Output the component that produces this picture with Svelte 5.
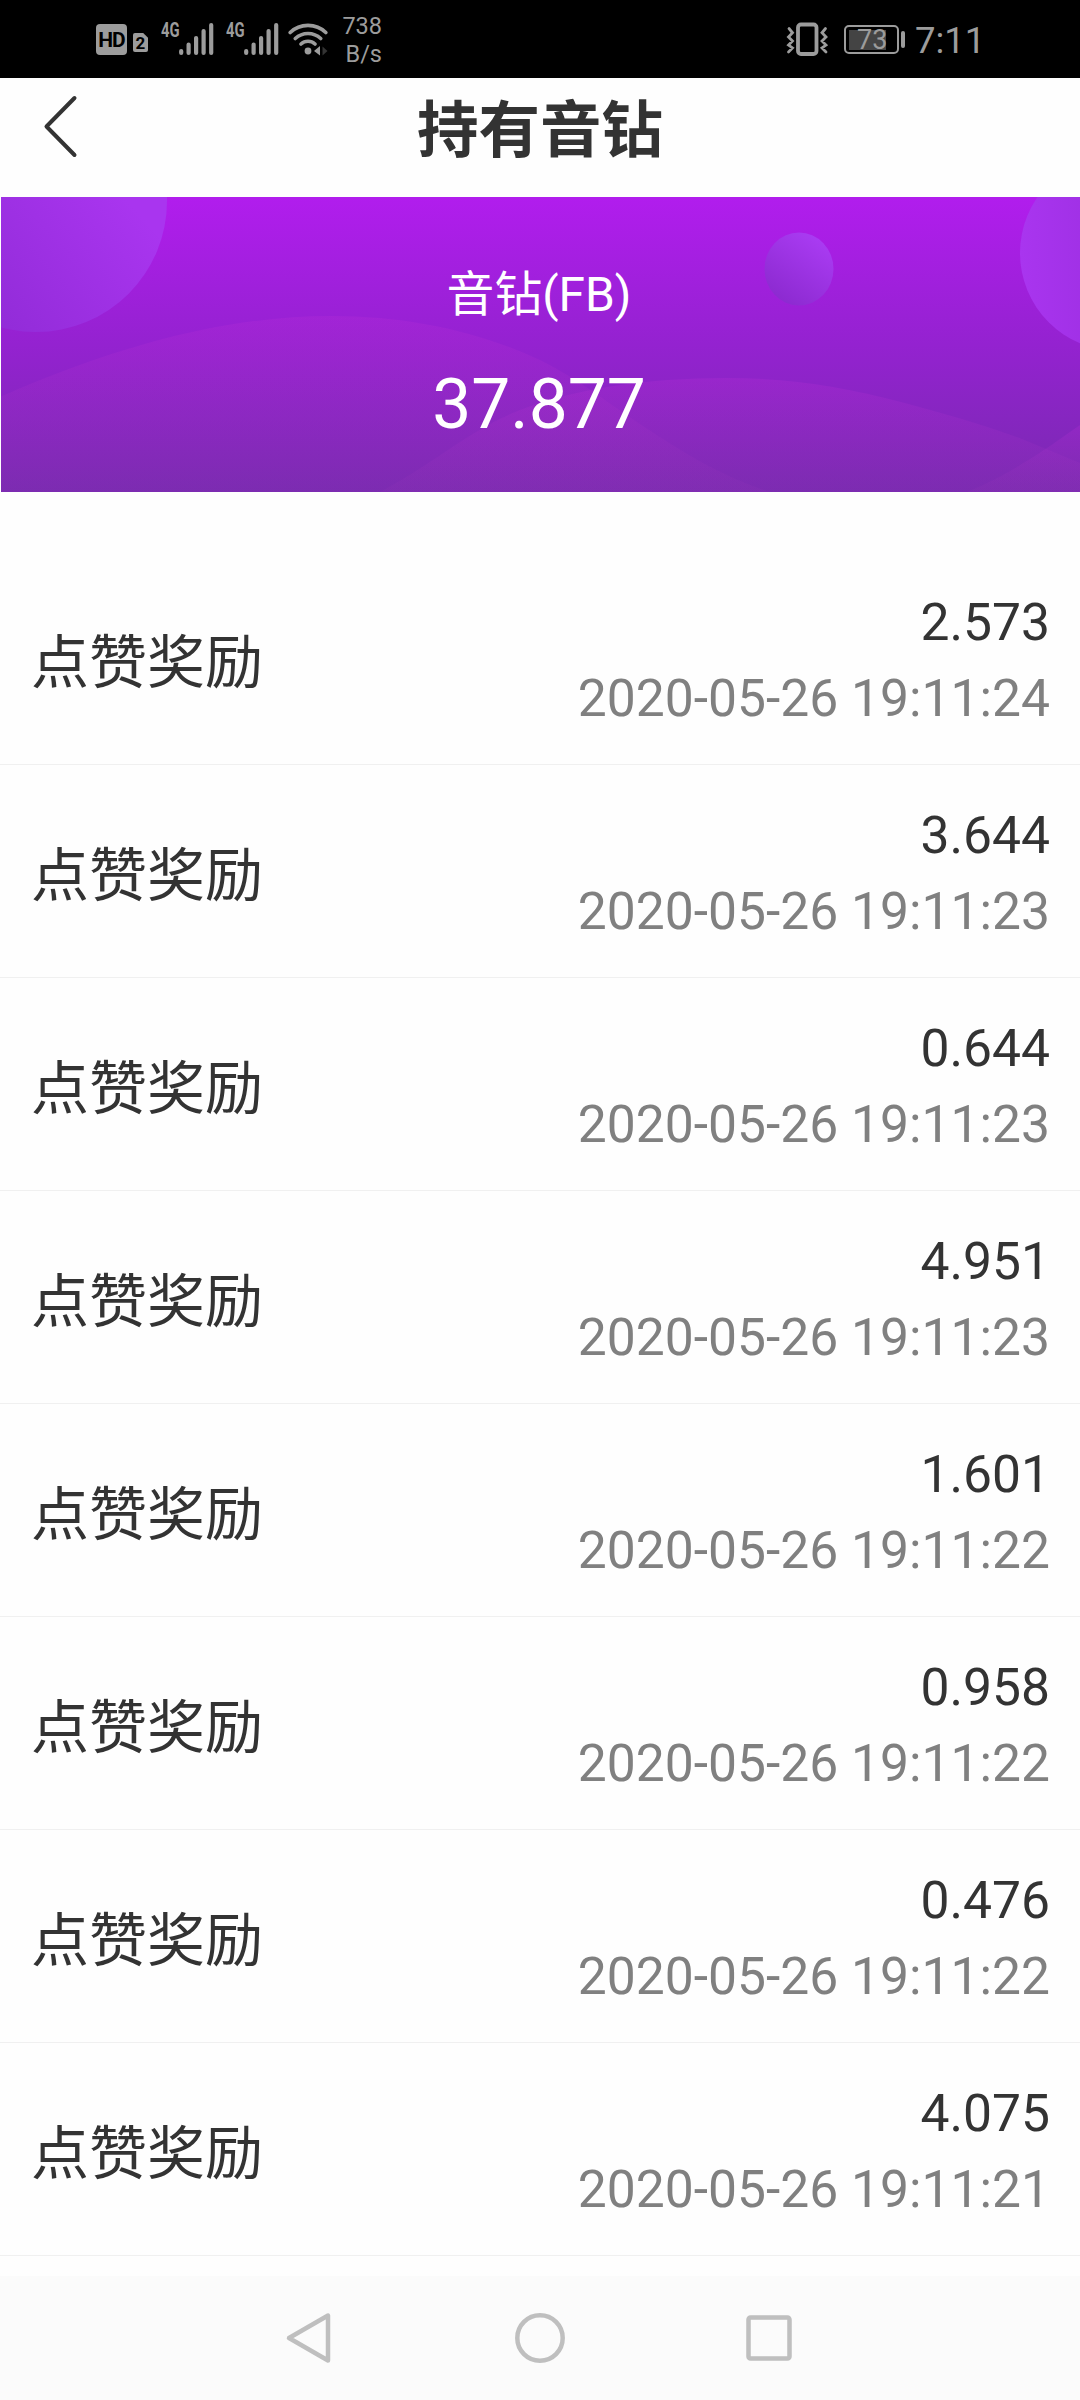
<script>
  const rows = [
    ['2.573', '2020-05-26 19:11:24'],
    ['3.644', '2020-05-26 19:11:23'],
    ['0.644', '2020-05-26 19:11:23'],
    ['4.951', '2020-05-26 19:11:23'],
    ['1.601', '2020-05-26 19:11:22'],
    ['0.958', '2020-05-26 19:11:22'],
    ['0.476', '2020-05-26 19:11:22'],
    ['4.075', '2020-05-26 19:11:21'],
  ];
</script>

{#snippet signal()}
  <div class="signal">
    <span class="net">4G</span>
    <svg width="35" height="34" viewBox="0 0 35 34" stroke="#9c9c9c" stroke-width="4.2" stroke-linecap="round">
      <path d="M2.2 29v2M9.6 22.500v8.500M17.100 16v15M24.600 9v22M32.200 3v28" />
    </svg>
  </div>
{/snippet}

<div class="screen">
  <div class="status">
    <div class="hd">HD</div>
    <div class="sim">2</div>
    {@render signal()}
    {@render signal()}
    <svg class="wifi" width="40" height="34" viewBox="0 0 40 34" fill="none" stroke="#9c9c9c" stroke-width="3.6" stroke-linecap="round">
      <path d="M2.200 10.500C12 1 28 1 37.800 10.500M7.300 16.500C14.500 9.800 25.500 9.800 32.700 16.500M13 22C17 18.400 23 18.400 27 22" />
      <circle cx="20" cy="29" r="3.400" fill="#9c9c9c" stroke="none" />
      <path d="M26 29l6-5v9.500z" fill="#9c9c9c" stroke="none" />
      <path d="M39.500 29l-5-4.500v9z" fill="#333" stroke="none" />
    </svg>
    <div class="speed"><span>738</span><span>B/s</span></div>
    <div class="spacer"></div>
    <svg class="vibrate" width="43" height="36" viewBox="0 0 43 36" fill="none" stroke="#9c9c9c" stroke-width="3" stroke-linecap="round">
      <rect x="12" y="3.500" width="18.500" height="29.500" rx="3" stroke-width="3.800" />
      <path d="M3 7.500l3.500 4.300L2.500 16l4 4-4 4 4 3-4 4M39.500 7.500L36 11.800l4 4.200-4 4 4 4-4 3 4 4" stroke-width="2.800" />
    </svg>
    <div class="battery"><div class="level"></div><span>73</span></div>
    <div class="tip"></div>
    <div class="clock">7:11</div>
  </div>

  <header>
    <svg width="40" height="68" viewBox="0 0 40 68" fill="none" stroke="#333" stroke-width="4" stroke-linecap="round" stroke-linejoin="round">
      <path d="M34.500 6L6.500 34.500L34.500 63" />
    </svg>
    <h1>持有音钻</h1>
  </header>

  <section class="banner">
    <svg class="art" width="1080" height="295" viewBox="0 0 1080 295">
      <defs>
        <linearGradient id="base" x1="0" y1="0" x2="0" y2="1">
          <stop offset="0" stop-color="#b11ded" />
          <stop offset=".5" stop-color="#9422d0" />
          <stop offset="1" stop-color="#782ab0" />
        </linearGradient>
        <linearGradient id="hill" x1="0" y1="0" x2="0" y2="1">
          <stop offset="0" stop-color="#c030d8" stop-opacity=".22" />
          <stop offset="1" stop-color="#9a38b8" stop-opacity=".12" />
        </linearGradient>
        <linearGradient id="ball" x1=".8" y1=".1" x2=".25" y2=".95">
          <stop offset="0" stop-color="#a93bf2" />
          <stop offset="1" stop-color="#8c2ad0" />
        </linearGradient>
        <linearGradient id="corner" x1=".85" y1=".5" x2=".3" y2="1">
          <stop offset="0" stop-color="#a935ef" />
          <stop offset="1" stop-color="#902bd6" />
        </linearGradient>
        <linearGradient id="side" x1="0" y1=".5" x2="1" y2=".5">
          <stop offset="0" stop-color="#a935ef" />
          <stop offset="1" stop-color="#9028d4" />
        </linearGradient>
      </defs>
      <rect width="1080" height="295" fill="url(#base)" />
      <path fill="url(#hill)" d="M0 200C50 178 95 161 148 146C210 129 270 119 331 119C410 119 480 135 540 163C580 183 605 204 643 229C685 257 725 281 770 295H0Z" />
      <path fill="url(#hill)" d="M380 295C425 271 455 246 490 227C550 194 640 181 726 181C790 181 845 190 901 205C945 217 985 228 1022 242L1080 266V295Z" />
      <path fill="url(#hill)" d="M967 295C1000 281 1025 266 1050 249L1080 228V295Z" />
      <circle cx="36" cy="4" r="131" fill="url(#corner)" />
      <ellipse cx="799" cy="72" rx="34.500" ry="36.500" fill="url(#ball)" />
      <circle cx="1118" cy="56" r="98" fill="url(#side)" />
    </svg>
    <p class="unit">音钻(FB)</p>
    <p class="total">37.877</p>
  </section>

  <main>
    {#each rows as [amount, time]}
      <div class="row">
        <span class="label">点赞奖励</span>
        <div class="detail"><span class="amount">{amount}</span><span class="time">{time}</span></div>
      </div>
    {/each}
  </main>

  <nav>
    <svg width="50" height="56" viewBox="0 0 50 56"><path d="M44 5.500V50.500L5 28Z" /></svg>
    <svg width="56" height="56" viewBox="0 0 56 56"><circle cx="28" cy="28" r="22.700" /></svg>
    <svg width="50" height="56" viewBox="0 0 50 56"><rect x="2.500" y="7.500" width="41" height="41" rx="2" /></svg>
  </nav>
</div>

<style>
  :global(body) { background: #fefefe; }
  .screen {
    width: 1080px;
    height: 2400px;
    display: flex;
    flex-direction: column;
    overflow: hidden;
    background: #fefefe;
    font-family: Roboto, "Noto Sans CJK SC", sans-serif;
    color: #333;
  }
  .status {
    height: 78px;
    flex: none;
    box-sizing: border-box;
    display: flex;
    align-items: flex-start;
    padding-left: 96px;
    background: #000;
    color: #9c9c9c;
  }
  .hd {
    width: 31px;
    height: 31px;
    margin-top: 24px;
    border-radius: 4px;
    background: #9c9c9c;
    color: #000;
    font-size: 21px;
    font-weight: 700;
    line-height: 32px;
    text-align: center;
    letter-spacing: -1px;
  }
  .sim {
    width: 15px;
    height: 19px;
    margin: 33px 0 0 6px;
    border-radius: 2px;
    background: #9c9c9c;
    clip-path: polygon(0 0, 68% 0, 100% 25%, 100% 100%, 0 100%);
    color: #000;
    font-size: 17px;
    font-weight: 700;
    line-height: 21px;
    text-align: center;
  }
  .signal {
    display: flex;
    width: 65px;
    margin-top: 22px;
  }
  .sim + .signal { margin-left: 13px; }
  .net {
    width: 18px;
    font-size: 20px;
    font-weight: 700;
    line-height: 16px;
    transform: scaleX(0.74);
    transform-origin: left center;
  }
  .signal svg { flex: none; }
  .wifi { margin: 22px 0 0 -3px; }
  .speed {
    display: flex;
    flex-direction: column;
    width: 54px;
    margin-top: 12px;
    text-align: right;
    font-size: 23.5px;
    line-height: 28px;
  }
  .spacer { flex: 1; }
  .vibrate { margin-top: 21px; }
  .battery {
    display: grid;
    box-sizing: border-box;
    width: 55px;
    height: 29px;
    margin: 25px 2px 0 15px;
    padding: 3px;
    border: 2px solid #9c9c9c;
    border-radius: 5px;
  }
  .level { grid-area: 1 / 1; width: 37px; height: 20px; background: #444; }
  .battery span {
    grid-area: 1 / 1;
    font-size: 27px;
    line-height: 21px;
    padding-left: 8px;
  }
  .tip { width: 4px; height: 17px; margin-top: 31px; border-radius: 2px; background: #9c9c9c; }
  .clock { width: 165px; margin: 20px 0 0 10px; font-size: 36.5px; line-height: 42px; }
  header {
    height: 119px;
    flex: none;
    display: grid;
    grid-template-columns: 80px 1fr 80px;
    align-items: start;
  }
  header svg { margin: 14px 0 0 40px; }
  h1 { margin: 9px 0 0; font-size: 61.5px; line-height: 88px; font-weight: 700; text-align: center; }
  .banner {
    position: relative;
    height: 295px;
    flex: none;
    margin-left: 1px;
    overflow: hidden;
    color: #fff;
    text-align: center;
  }
  .art { position: absolute; left: -1px; top: 0; }
  .banner p { position: relative; margin: 0 3px 0 0; }
  .unit { padding-top: 68px; font-size: 47.800px; line-height: 60px; }
  .total { padding-top: 40px; font-size: 69.500px; line-height: 80px; }
  main { flex: 1; padding-top: 60px; }
  .row {
    box-sizing: border-box;
    height: 213px;
    display: flex;
    align-items: center;
    justify-content: space-between;
    padding: 6px 30px 0 31px;
    border-bottom: 1px solid #f0f0f0;
  }
  .label { padding-top: 3px; font-size: 58px; line-height: 80px; }
  .detail { display: flex; flex-direction: column; text-align: right; font-size: 51.600px; line-height: 76px; }
  .time { color: #808080; }
  nav {
    height: 124px;
    flex: none;
    display: flex;
    align-items: center;
    justify-content: center;
    gap: 178px;
    background: #fbfbfb;
  }
  nav svg { fill: none; stroke: #bfbfbf; stroke-width: 4.500; stroke-linejoin: round; }
</style>
